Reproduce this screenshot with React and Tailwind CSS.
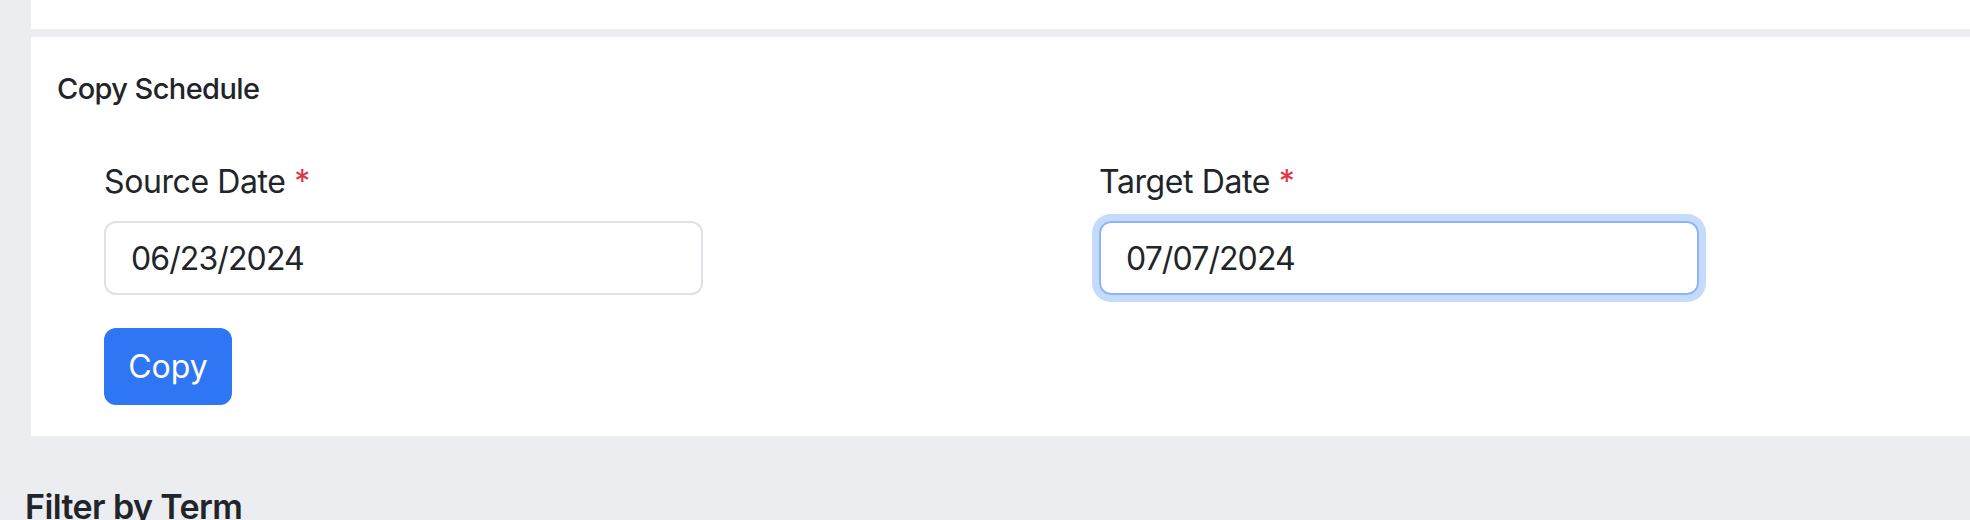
export default function App() {
  return (
    <div className="min-h-[520px] bg-[#ecedf0] pl-[31px] text-[#212529]" style={{ fontFamily: 'Inter, "Noto Sans", sans-serif' }}>
      {/* previous card, cut off */}
      <div className="h-[29px] bg-white" />

      {/* Copy schedule card */}
      <div className="mt-[8px] bg-white pt-[34px] pb-[31px] pl-[26px]">
        <h5 className="text-[29px] leading-[35px] font-medium tracking-[-0.6px]">Copy Schedule</h5>

        <div className="mt-[52px] flex pl-[47px]">
          <div className="w-[995px]">
            <label className="mb-[15px] block text-[32px] leading-[48px] tracking-[-0.4px]">
              Source Date <span className="text-[#dc3545]">*</span>
            </label>
            <input
              type="text"
              defaultValue="06/23/2024"
              className="h-[74px] w-[599px] rounded-[12px] border-2 border-[#dee2e6] px-[25px] text-[32px] tracking-[-0.9px] outline-none"
            />
            <div className="mt-[33px]">
              <button className="h-[77px] w-[128px] rounded-[12px] bg-[#2f76f5] text-[32px] text-white">Copy</button>
            </div>
          </div>
          <div>
            <label className="mb-[15px] block text-[32px] leading-[48px] tracking-[-0.4px]">
              Target Date <span className="text-[#dc3545]">*</span>
            </label>
            <input
              type="text"
              defaultValue="07/07/2024"
              className="h-[74px] w-[600px] rounded-[12px] border-2 border-[#8cb5f5] px-[25px] text-[32px] tracking-[-0.9px] outline-none shadow-[0_0_0_7px_#c6dafb]"
            />
          </div>
        </div>
      </div>

      <h2 className="-ml-[6px] mt-[51px] text-[34px] leading-[40px] font-semibold tracking-[-0.6px]">Filter by Term</h2>
    </div>
  );
}
